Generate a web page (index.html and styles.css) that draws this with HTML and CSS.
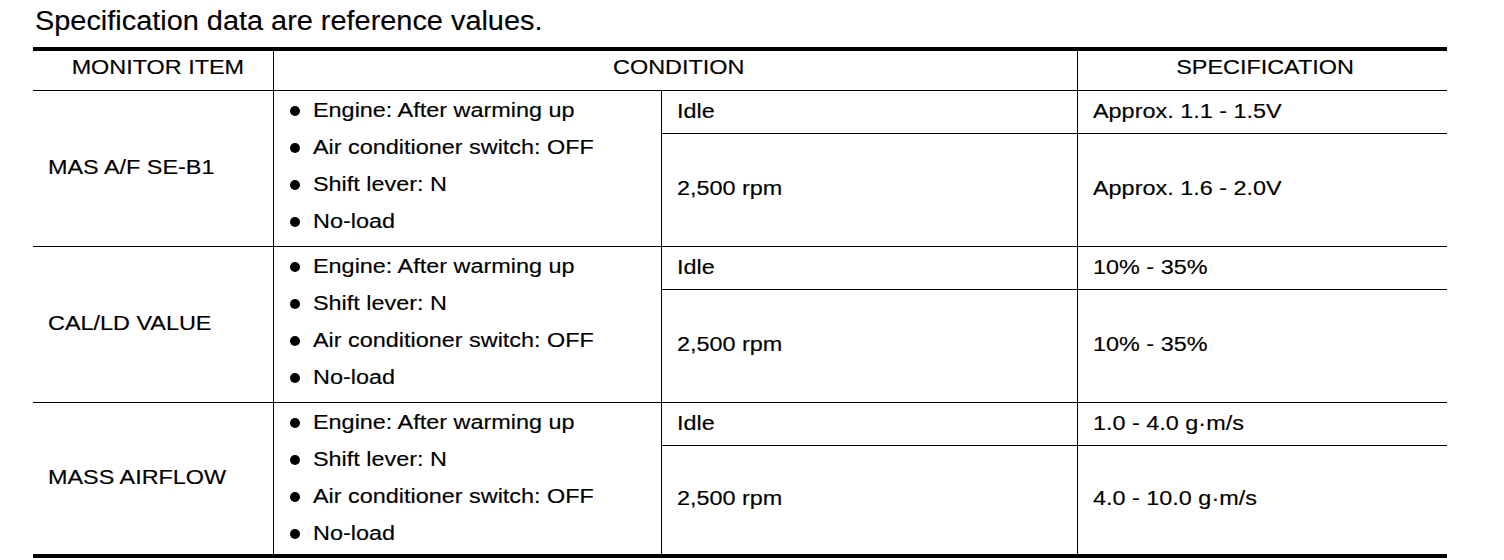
FILE: index.html
```html
<!DOCTYPE html>
<html lang="en">
<head>
<meta charset="utf-8">
<title>Specification data</title>
<link rel="stylesheet" href="styles.css">
</head>
<body>
<div class="page">
  <h1 class="title"><span class="t">Specification data are reference values.</span></h1>
  <div class="spec">
    <div class="cell head first"><span class="t tc">MONITOR ITEM</span></div>
    <div class="cell head span2"><span class="t tc">CONDITION</span></div>
    <div class="cell head last"><span class="t tc">SPECIFICATION</span></div>

    <div class="cell item rows2"><span class="t">MAS A/F SE-B1</span></div>
    <div class="cell cond rows2">
      <ul class="bullets">
        <li><span class="t">Engine: After warming up</span></li>
        <li><span class="t">Air conditioner switch: OFF</span></li>
        <li><span class="t">Shift lever: N</span></li>
        <li><span class="t">No-load</span></li>
      </ul>
    </div>
    <div class="cell val"><span class="t">Idle</span></div>
    <div class="cell val last"><span class="t">Approx. 1.1 - 1.5V</span></div>
    <div class="cell val tall"><span class="t">2,500 rpm</span></div>
    <div class="cell val tall last"><span class="t">Approx. 1.6 - 2.0V</span></div>

    <div class="cell item rows2"><span class="t">CAL/LD VALUE</span></div>
    <div class="cell cond rows2">
      <ul class="bullets">
        <li><span class="t">Engine: After warming up</span></li>
        <li><span class="t">Shift lever: N</span></li>
        <li><span class="t">Air conditioner switch: OFF</span></li>
        <li><span class="t">No-load</span></li>
      </ul>
    </div>
    <div class="cell val"><span class="t">Idle</span></div>
    <div class="cell val last"><span class="t">10% - 35%</span></div>
    <div class="cell val tall"><span class="t">2,500 rpm</span></div>
    <div class="cell val tall last"><span class="t">10% - 35%</span></div>

    <div class="cell item rows2 end"><span class="t">MASS AIRFLOW</span></div>
    <div class="cell cond rows2 end">
      <ul class="bullets">
        <li><span class="t">Engine: After warming up</span></li>
        <li><span class="t">Shift lever: N</span></li>
        <li><span class="t">Air conditioner switch: OFF</span></li>
        <li><span class="t">No-load</span></li>
      </ul>
    </div>
    <div class="cell val"><span class="t">Idle</span></div>
    <div class="cell val last"><span class="t">1.0 - 4.0 g·m/s</span></div>
    <div class="cell val tall end"><span class="t">2,500 rpm</span></div>
    <div class="cell val tall end last"><span class="t">4.0 - 10.0 g·m/s</span></div>
  </div>
</div>
</body>
</html>
```

FILE: styles.css
```css
* { box-sizing: border-box; }

html, body {
  margin: 0;
  padding: 0;
  background: #ffffff;
}

body {
  font-family: "Liberation Sans", Arial, Helvetica, sans-serif;
  color: #000000;
}

.page {
  padding: 0 0 0 33px;
}

.title {
  margin: 0 0 10px 2px;
  padding-top: 6px;
  font-size: 27px;
  line-height: 31px;
  font-weight: normal;
}

.t {
  display: inline-block;
  white-space: nowrap;
  transform: scaleX(1.2);
  transform-origin: left center;
  -webkit-text-stroke: 0.15px #000;
}

.title .t {
  transform: scaleX(1.07);
}

.tc {
  transform-origin: center center;
}

.spec {
  display: grid;
  grid-template-columns: 241px 388px 416px 369px;
  grid-template-rows: 40px 43px 113px 43px 113px 43px 108px;
  border-top: 4px solid #000;
  border-bottom: 4px solid #000;
  width: 1414px;
  font-size: 19.5px;
  line-height: 37px;
}

.cell {
  border-right: 1px solid #000;
  border-bottom: 1px solid #000;
  display: flex;
  align-items: center;
}

.cell.last { border-right: none; }
.cell.end { border-bottom: none; }

.head {
  justify-content: center;
  padding: 0 0 6px 6px;
}

.head.first {
  padding-left: 9px;
}

.span2 { grid-column: span 2; }
.rows2 { grid-row: span 2; }

.item {
  padding: 0 0 3px 15px;
}

.cond {
  align-items: flex-start;
  padding: 1px 0 0 16px;
}

.val {
  padding: 0 0 2px 15px;
}

.val.tall {
  padding-bottom: 3px;
}

.bullets {
  list-style: none;
  margin: 0;
  padding: 0;
}

.bullets li {
  display: flex;
  align-items: center;
  height: 37px;
}

.bullets li::before {
  content: "";
  flex: none;
  width: 10px;
  height: 10px;
  border-radius: 50%;
  background: #000;
  margin-right: 13px;
}
```
